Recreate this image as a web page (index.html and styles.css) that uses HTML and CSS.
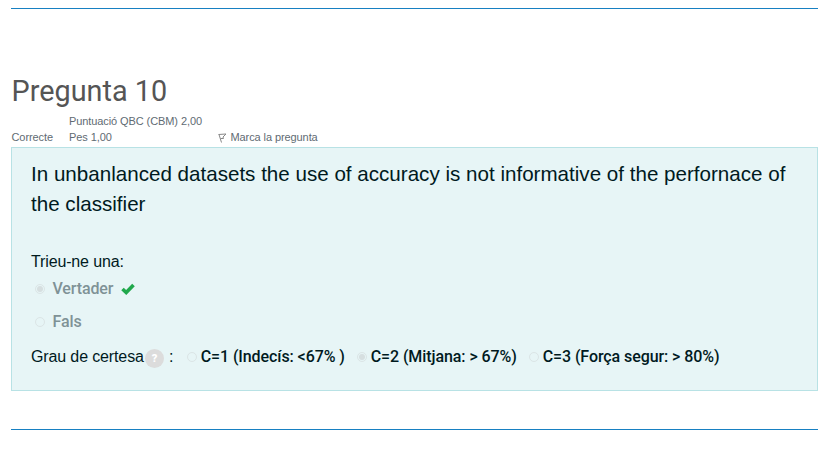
FILE: index.html
```html
<!DOCTYPE html>
<html lang="ca">
<head>
<meta charset="utf-8">
<title>Pregunta 10</title>
<link rel="stylesheet" href="styles.css">
</head>
<body>
<main class="question">
  <h3 class="title">Pregunta 10</h3>
  <div class="info">
    <span class="state">Correcte</span>
    <span class="grade">Puntuació QBC (CBM) 2,00<br>Pes 1,00</span>
    <span class="flag"><svg class="flag-icon" viewBox="0 0 9 10"><path d="M.5 1.500L8 1L5 4L5.500 5.500L2.500 5.500M1 1.500L3.500 9.500" /></svg><span>Marca la pregunta</span></span>
  </div>
  <section class="formulation">
    <p class="text">In unbanlanced datasets the use of accuracy is not informative of the perfornace of<br>the classifier</p>
    <div class="prompt">Trieu-ne una:</div>
    <div class="answer"><i class="radio checked"></i><span>Vertader</span><svg class="check" viewBox="0 0 14 12"><path d="M1.500 6L5.200 9.500L12.500 2" /></svg></div>
    <div class="answer second"><i class="radio"></i><span>Fals</span></div>
    <div class="certainty">
      <span class="label">Grau de certesa</span><span class="help">?</span><span class="colon">:</span>
      <span class="choice c1"><i class="radio"></i><span>C=1 (Indecís: &lt;67% )</span></span>
      <span class="choice c2"><i class="radio checked"></i><span>C=2 (Mitjana: &gt; 67%)</span></span>
      <span class="choice c3"><i class="radio"></i><span>C=3 (Força segur: &gt; 80%)</span></span>
    </div>
  </section>
</main>
</body>
</html>
```
FILE: styles.css
```css
* { box-sizing: border-box; }
body {
  margin: 0;
  background: #fff;
  font-family: "Liberation Sans", Arial, sans-serif;
  color: #001a1e;
}
.question {
  width: 807px;
  height: 422px;
  margin: 8px 0 0 11px;
  border-top: 1px solid #1780c2;
  border-bottom: 1px solid #1780c2;
}
.title {
  margin: 64px 0 0;
  padding-left: 0.6px;
  font: 400 28.8px/36px Roboto, sans-serif;
  color: #555;
}
.info {
  display: flex;
  align-items: flex-end;
  height: 38px;
  font-size: 11px;
  letter-spacing: -0.09px;
  line-height: 16px;
  color: #5f6b73;
  padding-bottom: 2px;
  white-space: nowrap;
}
.state { width: 58px; padding-left: 0.5px; }
.grade { width: 149px; }
.flag { display: flex; align-items: center; gap: 3.5px; }
.flag-icon { width: 9px; height: 10px; fill: none; stroke: #888; stroke-width: 1; margin-top: 2px; }
.formulation {
  height: 244px;
  padding: 11px 0 0 19px;
  background: #e7f5f6;
  border: 1px solid #b8e2e5;
  white-space: nowrap;
}
.text { margin: 0; font-size: 20.6px; line-height: 30px; }
.prompt { margin-top: 31px; font-size: 16px; letter-spacing: -0.14px; line-height: 24px; }
.answer {
  display: flex;
  align-items: center;
  height: 24px;
  margin: 3px 0 0 4px;
  font: 500 16px/24px Roboto, sans-serif;
  letter-spacing: -0.12px;
  color: #7f9296;
}
.answer span { margin-left: 7.5px; }
.second { margin-top: 9px; }
.radio {
  flex: none;
  display: flex;
  align-items: center;
  justify-content: center;
  width: 10px;
  height: 10px;
  border: 1px solid #dbe5e6;
  border-radius: 50%;
}
.checked::after { content: ""; width: 6px; height: 6px; border-radius: 50%; background: #d6dfe0; }
.check { width: 14px; height: 12px; margin-left: 8px; fill: none; stroke: #20a84c; stroke-width: 3.6; }
.certainty { display: flex; align-items: center; height: 24px; margin-top: 11px; font-size: 16px; }
.label { width: 114px; letter-spacing: -0.13px; }
.help {
  width: 19px;
  height: 19px;
  margin-top: 3px;
  border-radius: 50%;
  background: #dcdcdc;
  color: #fff;
  font: 900 11px/20px Roboto, sans-serif;
  text-align: center;
}
.colon { width: 5px; margin-left: 5px; }
.choice { display: flex; align-items: center; gap: 3.7px; font: 500 16px/24px Roboto, sans-serif; letter-spacing: -0.08px; }
.c1 { width: 158px; margin-left: 13px; }
.c2 { width: 159px; margin-left: 12px; }
.c3 { margin-left: 13px; }
```
